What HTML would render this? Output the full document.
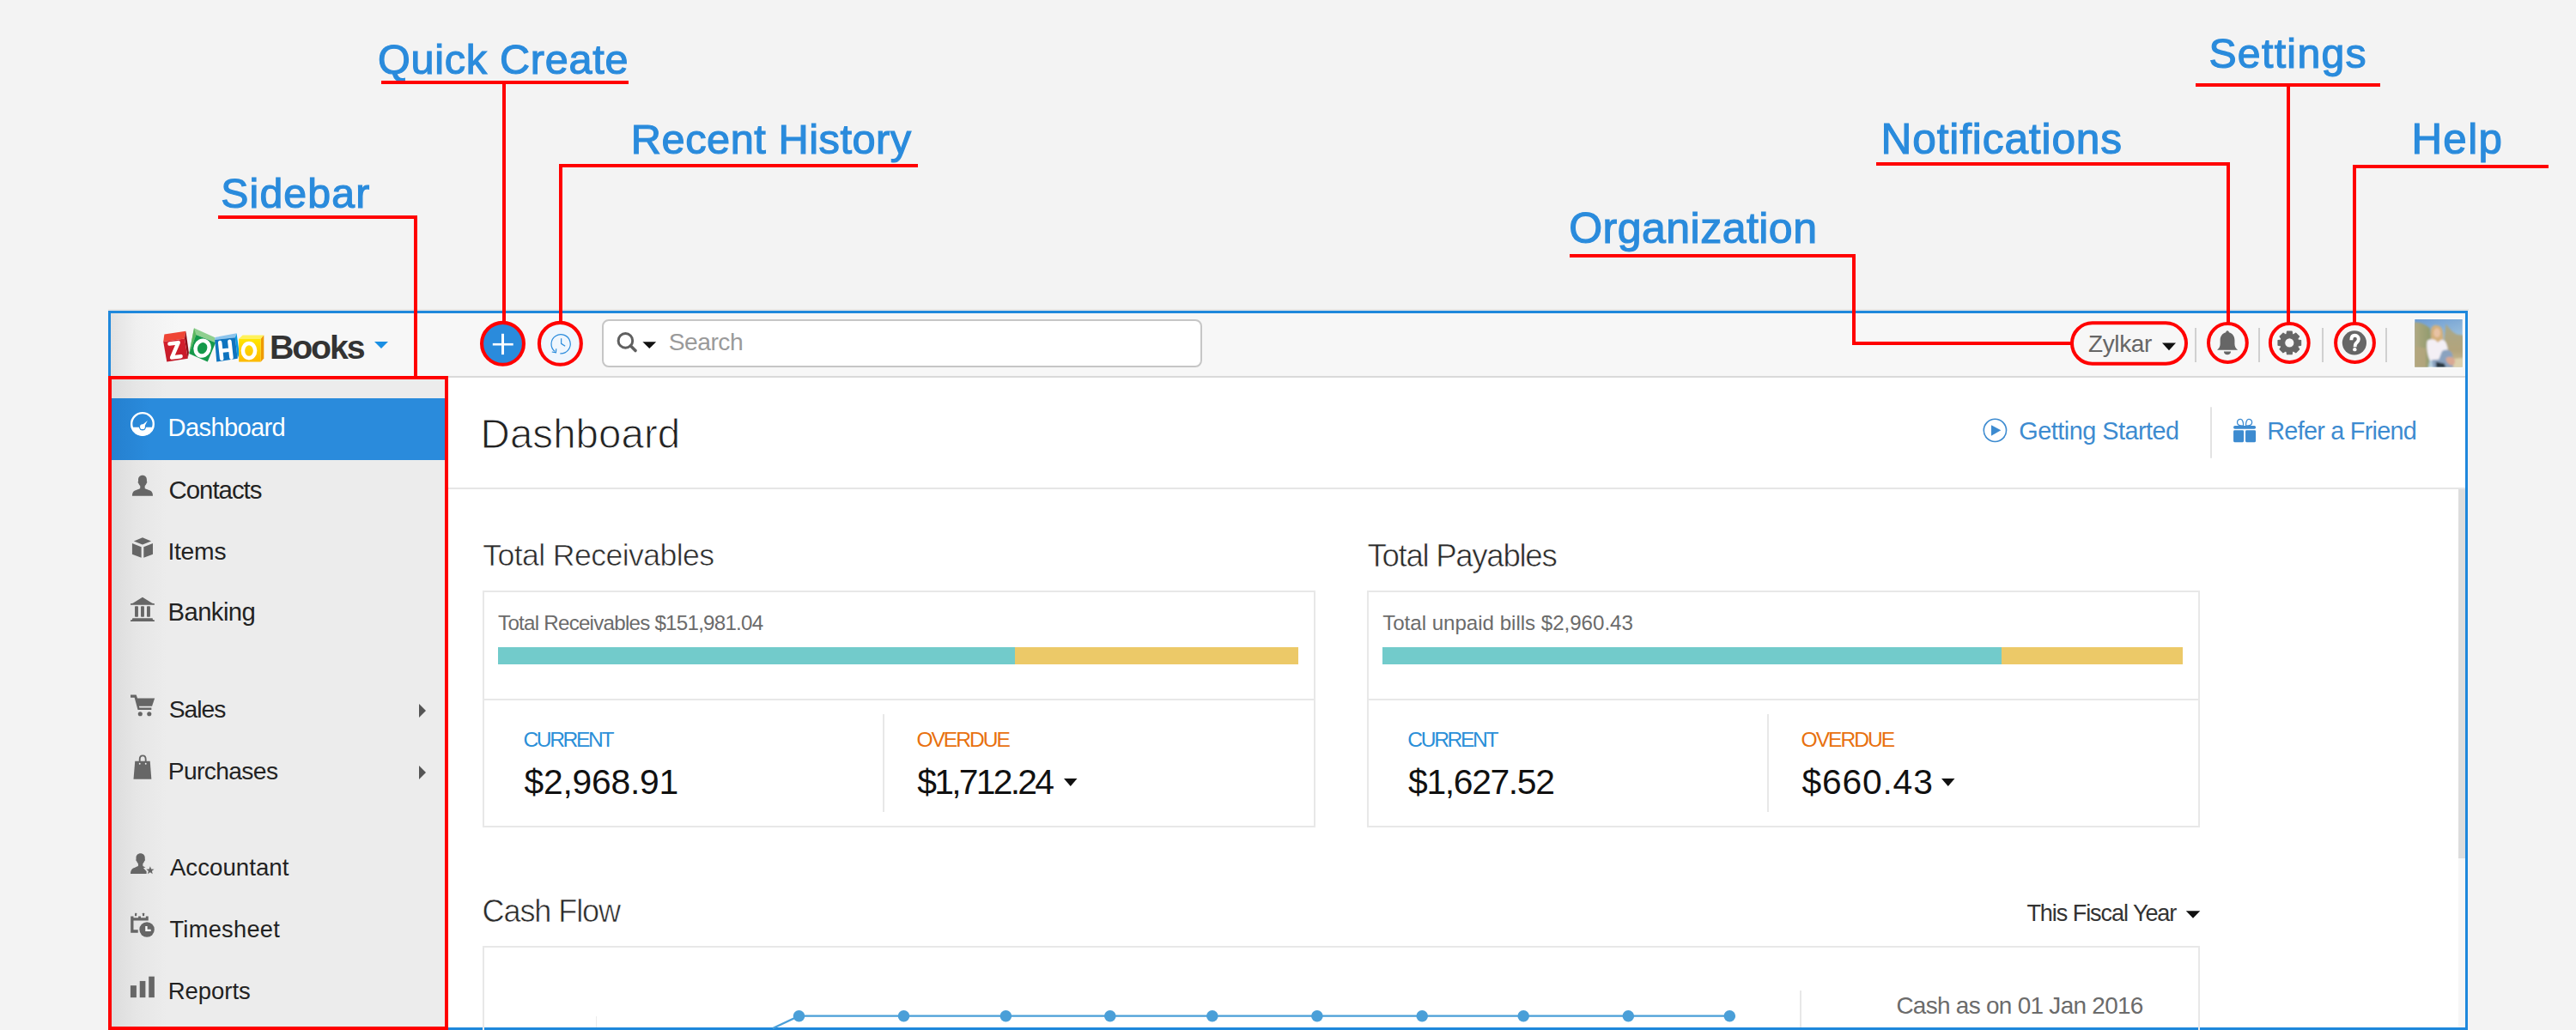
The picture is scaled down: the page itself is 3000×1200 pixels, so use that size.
<!DOCTYPE html>
<html><head><meta charset="utf-8"><title>Zoho Books Dashboard</title>
<style>
html,body{margin:0;padding:0;}
body{width:3000px;height:1200px;overflow:hidden;position:relative;background:#f3f3f3;font-family:"Liberation Sans",sans-serif;}
.t{position:absolute;white-space:nowrap;line-height:1;}
.r{position:absolute;}
svg.r{overflow:visible;}
</style></head><body>
<div class="t" style="left:440.0px;top:44.8px;font-size:48.62px;letter-spacing:0.71px;color:#2a8bdc;font-weight:normal;-webkit-text-stroke:1.2px #2a8bdc;">Quick Create</div>
<div class="t" style="left:734.8px;top:137.6px;font-size:48.76px;letter-spacing:0.52px;color:#2a8bdc;font-weight:normal;-webkit-text-stroke:1.2px #2a8bdc;">Recent History</div>
<div class="t" style="left:257.3px;top:200.9px;font-size:48.18px;letter-spacing:1.14px;color:#2a8bdc;font-weight:normal;-webkit-text-stroke:1.2px #2a8bdc;">Sidebar</div>
<div class="t" style="left:1827.2px;top:240.6px;font-size:50.07px;letter-spacing:0.45px;color:#2a8bdc;font-weight:normal;-webkit-text-stroke:1.2px #2a8bdc;">Organization</div>
<div class="t" style="left:2190.5px;top:137.5px;font-size:49.64px;letter-spacing:0.86px;color:#2a8bdc;font-weight:normal;-webkit-text-stroke:1.2px #2a8bdc;">Notifications</div>
<div class="t" style="left:2572.4px;top:37.8px;font-size:48.18px;letter-spacing:1.32px;color:#2a8bdc;font-weight:normal;-webkit-text-stroke:1.2px #2a8bdc;">Settings</div>
<div class="t" style="left:2808.4px;top:137.4px;font-size:49.34px;letter-spacing:1.36px;color:#2a8bdc;font-weight:normal;-webkit-text-stroke:1.2px #2a8bdc;">Help</div>
<div class="r" style="left:126px;top:360px;width:2749px;height:2px;background:#e6e6e6;"></div>
<div class="r" style="left:126px;top:362px;width:2748px;height:838px;background:#fff;"></div>
<div class="r" style="left:129px;top:365px;width:2742px;height:73px;background:linear-gradient(90deg,#e2e2e2 0px,#f0f0f0 30px,#f7f7f7 80px,#f7f7f7 100%);"></div>
<div class="r" style="left:129px;top:438px;width:2742px;height:2px;background:#dadada;"></div>
<div class="r" style="left:129px;top:440px;width:390px;height:757px;background:linear-gradient(90deg,#dcdcdc 0px,#e6e6e6 30px,#ececec 65px,#ececec 100%);"></div>
<div class="r" style="left:129px;top:464px;width:390px;height:72px;background:linear-gradient(90deg,#2580cf 0px,#2a8bdc 45px,#2a8bdc 100%);"></div>
<div class="r" style="left:126px;top:362px;width:2748px;height:838px;box-sizing:border-box;border:3px solid #1f88dc;border-bottom:none;"></div>
<div class="r" style="left:126px;top:1197px;width:2748px;height:3px;background:#1f88dc;"></div>
<svg class="r" style="left:180px;top:370px" width="140" height="60" viewBox="0 0 2403 1030">
<defs>
<linearGradient id="yel" x1="0" y1="0" x2="0" y2="1"><stop offset="0" stop-color="#ffe600"/><stop offset="1" stop-color="#fdb900"/></linearGradient>
<linearGradient id="redg" x1="0" y1="0" x2="0" y2="1"><stop offset="0" stop-color="#d71f2c"/><stop offset="1" stop-color="#c11b2a"/></linearGradient>
</defs>
<!-- red cube -->
<polygon points="175,480 195,335 625,270 600,420" fill="#ef4535"/>
<polygon points="600,420 625,270 685,700 665,820" fill="#8e0d17"/>
<polygon points="175,480 600,420 665,820 245,885" fill="url(#redg)"/>
<!-- green cube -->
<polygon points="690,720 790,210 1210,400 1220,500 830,345" fill="#8fcf8f"/>
<polygon points="690,720 790,210 830,345" fill="#5db860"/>
<polygon points="690,720 830,345 1220,500 1060,885" fill="#14994a"/>
<!-- blue cube -->
<polygon points="1205,445 1210,395 1640,315 1610,400" fill="#8cc4ec"/>
<polygon points="1610,400 1640,315 1695,720 1660,820" fill="#0a9ae0"/>
<polygon points="1205,445 1610,400 1660,820 1240,885" fill="#0f74bf"/>
<!-- yellow cube -->
<polygon points="1685,425 1760,350 2185,350 2125,425" fill="#fff25a"/>
<polygon points="2125,425 2185,350 2185,815 2125,885" fill="#ee9a00"/>
<polygon points="1685,425 2125,425 2125,885 1685,885" fill="url(#yel)"/>
<!-- letters -->
<g fill="none" stroke="#fff" stroke-width="78" stroke-linejoin="round" stroke-linecap="round">
<path d="M300,525 L475,500 L345,800 L525,775"/>
<ellipse cx="955" cy="612" rx="135" ry="155" transform="rotate(22 955 612)"/>
<path d="M1308,500 L1342,820 M1500,478 L1535,800 M1325,665 L1518,645"/>
<ellipse cx="1888" cy="662" rx="122" ry="147"/>
</g>
</svg>

<div class="t" style="left:313.9px;top:384.7px;font-size:39.30px;letter-spacing:-2.11px;color:#333333;font-weight:bold;">Books</div>
<svg class="r" style="left:430px;top:390px" width="30" height="24"><polygon points="6,8 22,8 14,16" fill="#1a8fe3"/></svg>
<div class="r" style="left:701px;top:372px;width:699px;height:56px;box-sizing:border-box;border:2px solid #c6c6c6;border-radius:8px;background:#fff;"></div>
<svg class="r" style="left:710px;top:380px" width="60" height="40"><circle cx="18.4" cy="16.9" r="8.3" fill="none" stroke="#5f5f5f" stroke-width="3"/><line x1="24.5" y1="23" x2="30" y2="28.5" stroke="#5f5f5f" stroke-width="3.6" stroke-linecap="round"/><polygon points="38.4,18.2 54.2,18.2 46.3,25.9" fill="#111"/></svg>
<div class="t" style="left:778.7px;top:384.3px;font-size:28.24px;letter-spacing:-0.51px;color:#9a9a9a;font-weight:normal;">Search</div>
<div class="t" style="left:2431.9px;top:386.5px;font-size:27.95px;letter-spacing:-0.31px;color:#666666;font-weight:normal;">Zylkar</div>
<svg class="r" style="left:2510px;top:392px" width="30" height="24"><polygon points="8,7.5 24,7.5 16,16.2" fill="#111"/></svg>
<div class="r" style="left:2556px;top:382px;width:2px;height:40px;background:#d0d0d0;"></div>
<div class="r" style="left:2630px;top:382px;width:2px;height:40px;background:#d0d0d0;"></div>
<div class="r" style="left:2704px;top:382px;width:2px;height:40px;background:#d0d0d0;"></div>
<div class="r" style="left:2778px;top:382px;width:2px;height:40px;background:#d0d0d0;"></div>
<svg class="r" style="left:0;top:0" width="3000" height="1200">
<!-- quick create -->
<circle cx="585.5" cy="400.3" r="24" fill="#2a8bdc"/>
<rect x="573.8" y="399.9" width="23.9" height="2.6" fill="#fff"/>
<rect x="584" y="388.8" width="3" height="24.3" fill="#fff"/>
<!-- recent history -->
<circle cx="652.4" cy="400.3" r="24" fill="#eff6fd"/>
<g transform="translate(555,370) scale(0.085404)" fill="none" stroke="#2a8bdc" stroke-width="14">
<path d="M1068,462 A130,130 0 1 1 1140,490"/>
<path d="M1028,468 L1082,478 L1086,425"/>
<path d="M1155,283 L1155,355 L1208,390"/>
</g>
<!-- bell -->
<g transform="translate(2560,370) scale(0.085404)" fill="#666">
<path d="M398,180 C385,180 378,192 378,203 C330,215 300,255 300,310 L300,360 C300,395 285,420 258,442 L540,442 C512,420 497,395 497,360 L497,310 C497,255 467,215 420,203 C420,192 412,180 398,180 Z"/>
<path d="M350,462 L446,462 C446,490 425,506 398,506 C371,506 350,490 350,462 Z"/>
</g>
<!-- gear -->
<g transform="translate(2560,370) scale(0.085404)">
<path id="gearp" fill="#666" stroke="#666" stroke-width="12" stroke-linejoin="round" fill-rule="evenodd" d="M1204.8,227.7 L1211.6,188.5 L1278.4,188.5 L1285.2,227.7 L1299.5,233.6 L1332.1,210.8 L1379.2,257.9 L1356.4,290.5 L1362.3,304.8 L1401.5,311.6 L1401.5,378.4 L1362.3,385.2 L1356.4,399.5 L1379.2,432.1 L1332.1,479.2 L1299.5,456.4 L1285.2,462.3 L1278.4,501.5 L1211.6,501.5 L1204.8,462.3 L1190.5,456.4 L1157.9,479.2 L1110.8,432.1 L1133.6,399.5 L1127.7,385.2 L1088.5,378.4 L1088.5,311.6 L1127.7,304.8 L1133.6,290.5 L1110.8,257.9 L1157.9,210.8 L1190.5,233.6 Z M1311,345 A66,66 0 1 0 1179,345 A66,66 0 1 0 1311,345 Z"/>
</g>
<!-- help -->
<g transform="translate(2560,370) scale(0.085404)">
<circle cx="2130" cy="345" r="165" fill="#666"/>
<path d="M2088,308 C2088,266 2108,244 2136,244 C2168,244 2188,266 2188,294 C2188,325 2162,338 2150,354 C2141,366 2138,378 2138,400" fill="none" stroke="#fff" stroke-width="46"/>
<circle cx="2135" cy="435" r="26" fill="#fff"/>
</g>
<!-- avatar -->
<g transform="translate(2805,365) scale(0.067961)">
<defs>
<linearGradient id="sky" x1="0" y1="0" x2="0.3" y2="1"><stop offset="0" stop-color="#6b9bd2"/><stop offset="0.6" stop-color="#9cc0dc"/><stop offset="1" stop-color="#b9d0de"/></linearGradient>
<linearGradient id="grL" x1="0" y1="0" x2="1" y2="0"><stop offset="0" stop-color="#b4aa86"/><stop offset="0.5" stop-color="#a0a277"/><stop offset="1" stop-color="#8f9a6d"/></linearGradient>
<linearGradient id="grR" x1="0" y1="0" x2="0" y2="1"><stop offset="0" stop-color="#a9a889"/><stop offset="0.6" stop-color="#b3a47c"/><stop offset="1" stop-color="#d3c39e"/></linearGradient>
<filter id="blur1"><feGaussianBlur stdDeviation="14"/></filter>
</defs>
<rect x="95" y="92" width="840" height="842" fill="#fff"/>
<svg x="105" y="102" width="820" height="822" viewBox="105 102 820 822">
<rect x="105" y="102" width="820" height="822" fill="url(#sky)"/>
<g filter="url(#blur1)">
<path d="M80,160 C180,140 300,200 370,260 L400,600 L330,950 L80,950 Z" fill="url(#grL)"/>
<path d="M640,180 C700,260 760,330 820,360 L950,380 L950,950 L640,950 L600,560 Z" fill="url(#grR)"/>
<path d="M80,560 L300,600 L300,950 L80,950 Z" fill="#b5a67e" opacity="0.8"/>
<path d="M780,780 L950,760 L950,950 L760,950 Z" fill="#ddd0ac"/>
<path d="M385,290 C390,215 450,200 480,205 C560,210 585,270 590,340 C595,420 600,480 590,525 L400,525 C385,450 380,360 385,290 Z" fill="#d4b07c"/>
<ellipse cx="487" cy="335" rx="58" ry="80" fill="#e8c2a4"/>
<path d="M320,470 C360,435 420,440 460,460 L500,500 L560,455 C610,450 650,480 670,600 L680,700 L600,760 L620,850 L540,880 L360,800 C320,700 300,560 320,470 Z" fill="#f3eff5"/>
<path d="M570,660 C610,610 720,610 750,700 L770,830 L760,930 L420,930 L400,800 L520,790 Z" fill="#8aa2bf"/>
<path d="M470,830 L610,860 L640,930 L470,930 Z" fill="#2c3742"/>
<path d="M640,770 C680,730 760,740 790,790 C810,840 780,900 730,890 C680,880 640,830 640,770 Z" fill="#d9a993"/>
</g>
</svg>
</g>
</svg>

<div class="t" style="left:195.6px;top:483.8px;font-size:29.11px;letter-spacing:-0.65px;color:#ffffff;font-weight:normal;">Dashboard</div>
<div class="t" style="left:196.5px;top:555.6px;font-size:29.40px;letter-spacing:-1.01px;color:#222;font-weight:normal;">Contacts</div>
<div class="t" style="left:195.4px;top:628.4px;font-size:28.24px;letter-spacing:-0.23px;color:#222;font-weight:normal;">Items</div>
<div class="t" style="left:195.6px;top:699.2px;font-size:29.26px;letter-spacing:-0.59px;color:#222;font-weight:normal;">Banking</div>
<div class="t" style="left:196.7px;top:812.0px;font-size:28.24px;letter-spacing:-0.96px;color:#222;font-weight:normal;">Sales</div>
<div class="t" style="left:195.7px;top:883.8px;font-size:28.24px;letter-spacing:-0.63px;color:#222;font-weight:normal;">Purchases</div>
<div class="t" style="left:197.9px;top:996.9px;font-size:27.66px;letter-spacing:0.02px;color:#222;font-weight:normal;">Accountant</div>
<div class="t" style="left:197.4px;top:1068.9px;font-size:27.22px;letter-spacing:0.30px;color:#222;font-weight:normal;">Timesheet</div>
<div class="t" style="left:195.7px;top:1140.6px;font-size:27.51px;letter-spacing:-0.03px;color:#222;font-weight:normal;">Reports</div>
<svg class="r" style="left:486px;top:819px" width="12" height="20"><polygon points="2,1 10,9 2,17" fill="#555"/></svg>
<svg class="r" style="left:486px;top:891px" width="12" height="20"><polygon points="2,1 10,9 2,17" fill="#555"/></svg>
<svg class="r" style="left:145px;top:1058px" width="40" height="40" viewBox="0 0 1030 1030">
<g fill="#666">
<path d="M185,245 L270,245 L270,290 L415,290 L415,245 L490,245 L490,290 L640,290 L640,245 L715,245 L715,375 L270,375 L270,650 L405,650 L405,740 L185,740 Z"/>
<rect x="310" y="150" width="55" height="90" rx="12"/>
<rect x="540" y="150" width="55" height="90" rx="12"/>
</g>
<circle cx="672" cy="645" r="250" fill="#eaeaea"/>
<circle cx="672" cy="645" r="225" fill="#666"/>
<path d="M655,540 L655,668 L790,668" fill="none" stroke="#fff" stroke-width="60"/>
</svg>
<svg class="r" style="left:145px;top:988px" width="40" height="40" viewBox="0 0 1030 1030">
<g fill="#666">
<path d="M480,160 C560,160 612,215 612,290 L612,340 C625,350 615,375 598,390 C585,425 565,450 550,470 L550,540 C575,555 600,570 630,580 L565,600 L660,700 L660,770 L180,770 C180,690 210,630 260,605 C310,585 370,560 410,540 L410,470 C395,450 375,425 362,390 C345,375 335,350 348,340 L348,290 C348,215 400,160 480,160 Z"/>
<polygon points="770,550 802,631 889,636 822,692 843,776 770,730 697,776 718,692 651,636 738,631"/>
</g>
</svg>
<svg class="r" style="left:145px;top:690px" width="40" height="40" viewBox="0 0 1030 1030">
<g fill="#666">
<polygon points="540,150 830,330 900,340 900,380 180,380 180,340 250,330"/>
<rect x="310" y="420" width="100" height="320" rx="20"/>
<rect x="490" y="420" width="100" height="320" rx="20"/>
<rect x="670" y="420" width="100" height="320" rx="20"/>
<polygon points="240,780 840,780 850,825 900,835 900,875 180,875 180,835 230,825"/>
</g>
</svg>
<svg class="r" style="left:145px;top:615px" width="40" height="40" viewBox="0 0 1030 1030">
<g fill="#666">
<polygon points="280,400 540,290 800,400 540,500"/>
<polygon points="230,465 505,575 505,895 230,790"/>
<polygon points="575,575 850,465 850,790 575,895"/>
</g>
</svg>
<svg class="r" style="left:145px;top:545px" width="40" height="40" viewBox="0 0 1030 1030">
<path fill="#666" d="M540,225 C620,225 668,280 668,360 L668,410 C685,415 680,440 665,455 C650,495 630,520 610,540 L610,615 C650,640 720,660 770,680 C830,705 850,770 850,842 L230,842 C230,770 250,705 310,680 C360,660 430,640 470,615 L470,540 C450,520 430,495 415,455 C400,440 395,415 412,410 L412,360 C412,280 460,225 540,225 Z"/>
</svg>
<svg class="r" style="left:145px;top:472px" width="40" height="40" viewBox="0 0 1030 1030">
<circle cx="540" cy="565" r="330" fill="none" stroke="#fff" stroke-width="62"/>
<path d="M194,665 L886,665 A360,360 0 0 1 194,665 Z" fill="#fff"/>
<circle cx="540" cy="650" r="108" fill="#2a8bdc"/>
<circle cx="540" cy="650" r="74" fill="#fff"/>
<polygon points="515,612 690,465 585,672" fill="#fff"/>
</svg>
<svg class="r" style="left:140px;top:470px" width="60" height="260" viewBox="0 0 238 1030">

<g fill="#666">
</g>
<g fill="#666">
</g>
</svg>
<svg class="r" style="left:140px;top:800px" width="60" height="120" viewBox="0 0 515 1030">
<g fill="#666">
<path d="M103,82 L160,82 L172,115 L345,115 L318,195 L188,195 L192,210 L312,210 L312,232 L176,232 L143,110 L103,110 Z"/>
<circle cx="200" cy="272" r="22"/><circle cx="290" cy="272" r="22"/>
<path d="M148,745 L298,745 L312,925 L133,925 Z"/>
</g>
<path d="M195,770 L195,728 C195,700 210,690 225,690 C240,690 255,700 255,728 L255,770" fill="none" stroke="#666" stroke-width="16"/>
<circle cx="195" cy="770" r="8" fill="#ebebeb"/><circle cx="255" cy="770" r="8" fill="#ebebeb"/>
</svg>
<svg class="r" style="left:140px;top:990px" width="60" height="180" viewBox="0 0 343 1030">
<g fill="#666">
<rect x="68" y="905" width="40" height="80"/>
<rect x="130" y="875" width="38" height="110"/>
<rect x="190" y="845" width="38" height="140"/>
</g>
</svg>

<div class="t" style="left:559.6px;top:481.9px;font-size:47.45px;letter-spacing:0.06px;color:#222222;font-weight:normal;-webkit-text-stroke:1px #fff;">Dashboard</div>
<div class="r" style="left:519px;top:568px;width:2352px;height:2px;background:#e6e6e6;"></div>
<div class="t" style="left:2351.3px;top:488.0px;font-size:28.82px;letter-spacing:-0.50px;color:#3d8bd0;font-weight:normal;">Getting Started</div>
<div class="t" style="left:2640.3px;top:488.0px;font-size:28.82px;letter-spacing:-0.75px;color:#3d8bd0;font-weight:normal;">Refer a Friend</div>
<div class="r" style="left:2574px;top:474px;width:2px;height:60px;background:#e3e3e3;border-radius:1px;"></div>
<svg class="r" style="left:2300px;top:480px" width="60" height="40" viewBox="0 0 1545 1030">
<circle cx="603" cy="550" r="338" fill="none" stroke="#3d8bd0" stroke-width="42"/>
<polygon points="490,390 780,550 490,715" fill="#3d8bd0"/>
</svg>
<svg class="r" style="left:2590px;top:480px" width="60" height="40" viewBox="0 0 1545 1030">
<g fill="#3d8bd0">
<rect x="285" y="415" width="670" height="95" rx="45"/>
<rect x="285" y="550" width="310" height="355" rx="35"/>
<rect x="645" y="550" width="310" height="355" rx="35"/>
</g>
<g fill="none" stroke="#3d8bd0" stroke-width="34">
<path d="M580,415 C590,330 560,215 500,215 C440,215 400,260 400,315 C400,380 460,415 580,415"/>
<path d="M660,415 C650,330 680,215 740,215 C800,215 840,260 840,315 C840,380 780,415 660,415"/>
</g>
</svg>

<div class="r" style="left:2863px;top:570px;width:8px;height:430px;background:#dddddd;"></div>
<div class="r" style="left:2863px;top:1000px;width:8px;height:197px;background:#f6f6f6;"></div>
<div class="t" style="left:562.2px;top:629.5px;font-size:35.66px;letter-spacing:-0.60px;color:#2a2a2a;font-weight:normal;-webkit-text-stroke:0.6px #fff;">Total Receivables</div>
<div class="t" style="left:1592.5px;top:629.8px;font-size:36.68px;letter-spacing:-1.33px;color:#2a2a2a;font-weight:normal;-webkit-text-stroke:0.6px #fff;">Total Payables</div>
<div class="r" style="left:562px;top:688px;width:970px;height:276px;box-sizing:border-box;border:2px solid #e8e8e8;"></div>
<div class="r" style="left:562px;top:814px;width:970px;height:2px;background:#e8e8e8;"></div>
<div class="r" style="left:1028px;top:832px;width:2px;height:114px;background:#e8e8e8;"></div>
<div class="r" style="left:1592px;top:688px;width:970px;height:276px;box-sizing:border-box;border:2px solid #e8e8e8;"></div>
<div class="r" style="left:1592px;top:814px;width:970px;height:2px;background:#e8e8e8;"></div>
<div class="r" style="left:2058px;top:832px;width:2px;height:114px;background:#e8e8e8;"></div>
<div class="t" style="left:580.1px;top:714.0px;font-size:24.16px;letter-spacing:-0.76px;color:#6b6b6b;font-weight:normal;">Total Receivables $151,981.04</div>
<div class="t" style="left:1610.2px;top:714.0px;font-size:24.16px;letter-spacing:-0.04px;color:#6b6b6b;font-weight:normal;">Total unpaid bills $2,960.43</div>
<div class="r" style="left:580px;top:754px;width:602px;height:20px;background:#72cbcb;"></div>
<div class="r" style="left:1182px;top:754px;width:330.3px;height:20px;background:#ecc968;"></div>
<div class="r" style="left:1610px;top:754px;width:720.7px;height:20px;background:#72cbcb;"></div>
<div class="r" style="left:2330.7px;top:754px;width:211.3px;height:20px;background:#ecc968;"></div>
<div class="t" style="left:609.4px;top:849.9px;font-size:24.60px;letter-spacing:-2.35px;color:#2b8fd8;font-weight:normal;">CURRENT</div>
<div class="t" style="left:1067.4px;top:849.9px;font-size:24.60px;letter-spacing:-2.03px;color:#e8710f;font-weight:normal;">OVERDUE</div>
<div class="t" style="left:1639.3px;top:849.9px;font-size:24.60px;letter-spacing:-2.33px;color:#2b8fd8;font-weight:normal;">CURRENT</div>
<div class="t" style="left:2097.6px;top:849.9px;font-size:24.60px;letter-spacing:-2.03px;color:#e8710f;font-weight:normal;">OVERDUE</div>
<div class="t" style="left:610.6px;top:890.9px;font-size:40.83px;letter-spacing:-0.26px;color:#111111;font-weight:normal;">$2,968.91</div>
<div class="t" style="left:1068.2px;top:890.9px;font-size:40.83px;letter-spacing:-2.73px;color:#111111;font-weight:normal;">$1,712.24</div>
<div class="t" style="left:1640.1px;top:890.9px;font-size:40.83px;letter-spacing:-1.35px;color:#111111;font-weight:normal;">$1,627.52</div>
<div class="t" style="left:2098.4px;top:890.9px;font-size:40.83px;letter-spacing:0.81px;color:#111111;font-weight:normal;">$660.43</div>
<svg class="r" style="left:1236.5px;top:903px" width="22" height="18"><polygon points="2,4 17.5,4 9.75,13" fill="#111"/></svg>
<svg class="r" style="left:2259.4px;top:903px" width="22" height="18"><polygon points="2,4 17.5,4 9.75,13" fill="#111"/></svg>
<div class="t" style="left:561.5px;top:1043.7px;font-size:36.10px;letter-spacing:-1.11px;color:#2a2a2a;font-weight:normal;-webkit-text-stroke:0.6px #fff;">Cash Flow</div>
<div class="t" style="left:2360.4px;top:1049.9px;font-size:27.07px;letter-spacing:-1.07px;color:#333333;font-weight:normal;">This Fiscal Year</div>
<svg class="r" style="left:2543px;top:1058px" width="22" height="16"><polygon points="2.8,3.3 19.3,3.3 11,11.7" fill="#111"/></svg>
<div class="r" style="left:562px;top:1102px;width:2000px;height:120px;box-sizing:border-box;border:2px solid #e8e8e8;"></div>
<div class="r" style="left:2096px;top:1154px;width:2px;height:43px;background:#e8e8e8;"></div>
<div class="r" style="left:694px;top:1184px;width:1px;height:13px;background:#ececec;"></div>
<div class="t" style="left:2208.4px;top:1158.4px;font-size:27.95px;letter-spacing:-0.71px;color:#6b6b6b;font-weight:normal;">Cash as on 01 Jan 2016</div>
<svg class="r" style="left:0;top:0" width="3000" height="1200">
<polyline points="900,1198 930.5,1183.7 930.5,1183.7 1052.5,1183.7 1171.4,1183.7 1292.8,1183.7 1411.8,1183.7 1533.9,1183.7 1656.2,1183.7 1774.2,1183.7 1896.3,1183.7 2014.3,1183.7" fill="none" stroke="#4a9fd8" stroke-width="2.2"/>
<circle cx="930.5" cy="1183.7" r="6.8" fill="#4a9fd8"/>
<circle cx="1052.5" cy="1183.7" r="6.8" fill="#4a9fd8"/>
<circle cx="1171.4" cy="1183.7" r="6.8" fill="#4a9fd8"/>
<circle cx="1292.8" cy="1183.7" r="6.8" fill="#4a9fd8"/>
<circle cx="1411.8" cy="1183.7" r="6.8" fill="#4a9fd8"/>
<circle cx="1533.9" cy="1183.7" r="6.8" fill="#4a9fd8"/>
<circle cx="1656.2" cy="1183.7" r="6.8" fill="#4a9fd8"/>
<circle cx="1774.2" cy="1183.7" r="6.8" fill="#4a9fd8"/>
<circle cx="1896.3" cy="1183.7" r="6.8" fill="#4a9fd8"/>
<circle cx="2014.3" cy="1183.7" r="6.8" fill="#4a9fd8"/>
</svg>

<svg class="r" style="left:0;top:0" width="3000" height="1200">
<g fill="#ff0000">
<rect x="444" y="94" width="288" height="4"/>
<rect x="585" y="94" width="4" height="282"/>
<rect x="651" y="191" width="418" height="4"/>
<rect x="651" y="191" width="4" height="185"/>
<rect x="254" y="251" width="232" height="4"/>
<rect x="482" y="251" width="4" height="190"/>
<rect x="1828" y="296" width="333" height="4"/>
<rect x="2157" y="296" width="4" height="106"/>
<rect x="2157" y="398" width="256" height="4"/>
<rect x="2185" y="189" width="412" height="4"/>
<rect x="2593" y="189" width="4" height="188"/>
<rect x="2557" y="97" width="215" height="4"/>
<rect x="2663" y="97" width="4" height="280"/>
<rect x="2740" y="192" width="228" height="4"/>
<rect x="2740" y="192" width="4" height="185"/>
</g>
<g fill="none" stroke="#ff0000">
<rect x="128" y="440" width="392" height="758" stroke-width="4"/>
<rect x="2413" y="376.3" width="133" height="47.4" rx="23.7" ry="23.7" stroke-width="4"/>
<circle cx="585.5" cy="400.3" r="24.45" stroke-width="4.1"/>
<circle cx="652.4" cy="400.3" r="24.45" stroke-width="4.1"/>
<circle cx="2594.4" cy="399.5" r="22.4" stroke-width="4"/>
<circle cx="2666.3" cy="399.5" r="22.4" stroke-width="4"/>
<circle cx="2742.5" cy="399.5" r="22.4" stroke-width="4"/>
</g>
</svg>

</body></html>
